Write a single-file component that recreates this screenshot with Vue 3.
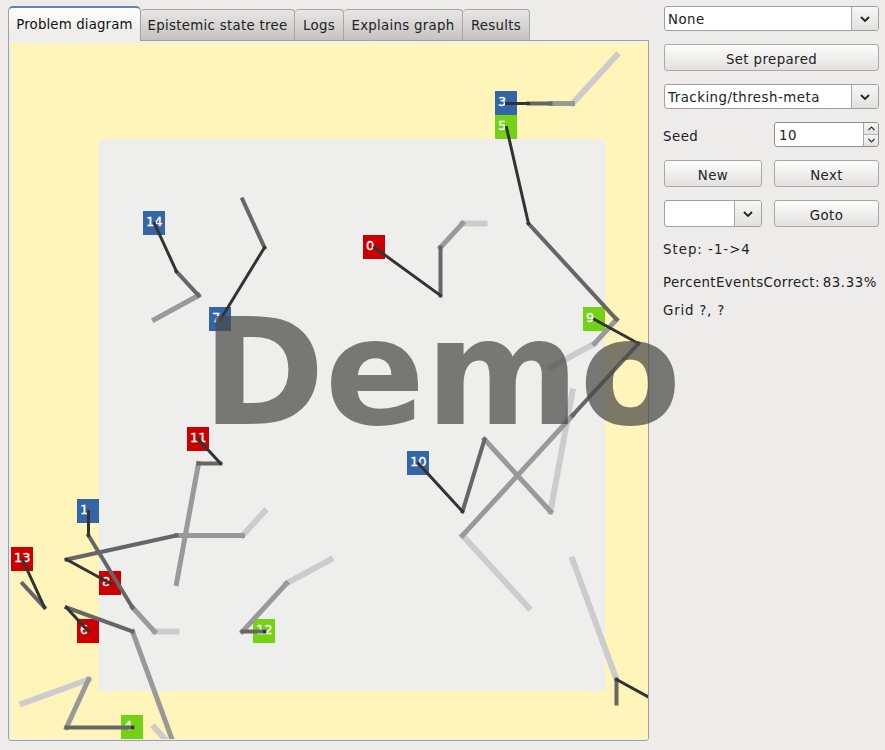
<template>
  <div class="app">
    <div class="main">
      <div class="tabs">
        <div
          v-for="(tab, i) in tabs"
          :key="tab"
          class="tab"
          :class="{ active: i === 0 }"
        >
          {{ tab }}
        </div>
      </div>
      <div class="panel">
        <svg class="canvas" width="637" height="696" viewBox="11 43 637 696">
          <rect x="11" y="43" width="637" height="696" fill="#fff4b9" />
          <rect x="99" y="139" width="506" height="552" fill="#eeeeec" />
          <g v-for="a in agents" :key="a.id">
            <rect :x="a.x - 11" :y="a.y - 12" width="22" height="24" :fill="a.color" />
            <text :x="a.x - 8" :y="a.y + 3" class="label">{{ a.id }}</text>
          </g>
          <g transform="translate(0.5 0.5)">
            <line
              v-for="(s, i) in segments"
              :key="i"
              :x1="s.x1"
              :y1="s.y1"
              :x2="s.x2"
              :y2="s.y2"
              :stroke="s.color"
              :stroke-width="s.width"
              stroke-linecap="square"
            />
          </g>
        </svg>
      </div>
    </div>

    <div class="side">
      <div class="combo">
        <span class="combo-text">None</span>
        <span class="combo-btn"><svg width="10" height="6" viewBox="0 0 10 6"><path d="M1 1l4 4 4-4" fill="none" stroke="#222" stroke-width="1.8" /></svg></span>
      </div>
      <button class="btn wide">Set prepared</button>
      <div class="combo">
        <span class="combo-text">Tracking/thresh-meta</span>
        <span class="combo-btn"><svg width="10" height="6" viewBox="0 0 10 6"><path d="M1 1l4 4 4-4" fill="none" stroke="#222" stroke-width="1.8" /></svg></span>
      </div>
      <div class="row seed">
        <span class="seed-label">Seed</span>
        <div class="spin">
          <span class="spin-text">10</span>
          <span class="spin-btns">
            <span class="spin-up"><svg width="7" height="5" viewBox="0 0 7 5"><path d="M.5 4l3-3 3 3" fill="none" stroke="#333" stroke-width="1.1" /></svg></span>
            <span class="spin-down"><svg width="7" height="5" viewBox="0 0 7 5"><path d="M.5 1l3 3 3-3" fill="none" stroke="#333" stroke-width="1.1" /></svg></span>
          </span>
        </div>
      </div>
      <div class="row">
        <button class="btn">New</button>
        <button class="btn">Next</button>
      </div>
      <div class="row">
        <div class="combo tall">
          <span class="combo-text"></span>
          <span class="combo-btn"><svg width="10" height="6" viewBox="0 0 10 6"><path d="M1 1l4 4 4-4" fill="none" stroke="#222" stroke-width="1.8" /></svg></span>
        </div>
        <button class="btn">Goto</button>
      </div>
      <div class="step">Step: -1-&gt;4</div>
      <div class="percent"><span>PercentEventsCorrect:</span><span class="value">83.33%</span></div>
      <div class="grid-info">Grid ?, ?</div>
    </div>

    <div class="demo">Demo</div>
  </div>
</template>

<script setup>
const tabs = ['Problem diagram', 'Epistemic state tree', 'Logs', 'Explains graph', 'Results']

const RED = '#cc0000'
const BLUE = '#3465a4'
const GREEN = '#73d216'

const agents = [
  { id: 0, x: 374, y: 247, color: RED, path: [[374, 247], [440, 295], [440, 247], [462, 223], [484, 223]] },
  { id: 1, x: 88, y: 511, color: BLUE, path: [[88, 511], [88, 535], [132, 607], [154, 631], [176, 631]] },
  { id: 3, x: 506, y: 103, color: BLUE, path: [[506, 103], [528, 103], [550, 103], [572, 103], [616, 55]] },
  { id: 4, x: 132, y: 727, color: GREEN, path: [[132, 727], [132, 727], [66, 727], [88, 679], [22, 703]] },
  { id: 5, x: 506, y: 127, color: GREEN, path: [[506, 127], [528, 223], [616, 319], [594, 343], [550, 367]] },
  { id: 6, x: 88, y: 631, color: RED, path: [[88, 631], [66, 607], [132, 631], [176, 751], [154, 727]] },
  { id: 7, x: 220, y: 319, color: BLUE, path: [[220, 319], [264, 247], [242, 199]] },
  { id: 8, x: 110, y: 583, color: RED, path: [[110, 583], [66, 559], [176, 535], [242, 535], [264, 511]] },
  { id: 9, x: 594, y: 319, color: GREEN, path: [[594, 319], [638, 343], [572, 415], [462, 535], [528, 607]] },
  { id: 10, x: 418, y: 463, color: BLUE, path: [[418, 463], [462, 511], [484, 439], [550, 511], [572, 391]] },
  { id: 11, x: 198, y: 439, color: RED, path: [[198, 439], [220, 463], [198, 463], [176, 583]] },
  { id: 12, x: 264, y: 631, color: GREEN, path: [[264, 631], [264, 631], [242, 631], [286, 583], [330, 559]] },
  { id: 13, x: 22, y: 559, color: RED, path: [[22, 559], [44, 607], [22, 583]] },
  { id: 14, x: 154, y: 223, color: BLUE, path: [[154, 223], [176, 271], [198, 295], [154, 319]] }
]

// this one has no square on the canvas, it starts past the right edge
const offscreen = [[660, 703], [616, 679], [616, 703]]

const styles = [
  { color: '#333333', width: 3 },
  { color: '#666666', width: 4 },
  { color: '#999999', width: 5 },
  { color: '#cccccc', width: 6 }
]

const toSegments = (path) =>
  path.slice(1).map((p, i) => ({
    x1: path[i][0],
    y1: path[i][1],
    x2: p[0],
    y2: p[1],
    level: i,
    ...styles[i]
  }))

// lightest first, so the fresh dark trail ends up on top
const segments = [
  { x1: 616, y1: 679, x2: 572, y2: 559, level: 3, ...styles[3] },
  ...toSegments(offscreen),
  ...agents.flatMap((a) => toSegments(a.path))
].sort((a, b) => b.level - a.level)
</script>

<style>
html,
body {
  background: #edecea;
}
</style>

<style scoped>
.app {
  position: relative;
  display: flex;
  gap: 15px;
  width: 885px;
  height: 750px;
  padding: 6px 6px 0 8px;
  box-sizing: border-box;
  overflow: hidden;
  background: #edecea;
  font-family: "DejaVu Sans", sans-serif;
  font-size: 13.33px;
  color: #222;
}
.main {
  width: 641px;
}
.tabs {
  display: flex;
  align-items: flex-end;
  height: 35px;
  margin-bottom: -1px;
  position: relative;
  z-index: 1;
}
.tab {
  height: 32px;
  line-height: 32px;
  box-sizing: border-box;
  text-align: center;
  letter-spacing: 0.3px;
  border: 1px solid #a6a6a6;
  border-bottom-color: #a0a0a0;
  border-left-width: 0;
  border-radius: 4px 4px 0 0;
  background: linear-gradient(#e8e7e5, #c4c3c1);
  color: #222;
  white-space: nowrap;
}
.tab:nth-child(1) { width: 133px; }
.tab:nth-child(2) { width: 154px; }
.tab:nth-child(3) { width: 49px; }
.tab:nth-child(4) { width: 119px; }
.tab:nth-child(5) { width: 67px; }
.tab.active {
  height: 35px;
  line-height: 34px;
  letter-spacing: 0.15px;
  border: 1px solid #a0a0a0;
  border-top: 2px solid #5b86b9;
  border-bottom: 0;
  border-radius: 5px 5px 0 0;
  background: linear-gradient(#ffffff, #efeeec 70%);
  color: #111;
}
.panel {
  height: 701px;
  padding: 2px 0 0 2px;
  box-sizing: border-box;
  border: 1px solid #a0a0a0;
  border-radius: 0 0 3px 3px;
  background: #f0efed;
}
.canvas {
  display: block;
}
.label {
  font-family: "DejaVu Sans", sans-serif;
  font-size: 13px;
  fill: #fff;
  stroke: #fff;
  stroke-width: 0.3px;
}
.side {
  width: 215px;
  display: flex;
  flex-direction: column;
  letter-spacing: 0.5px;
}
.row {
  display: grid;
  grid-template-columns: 98px 105px;
  column-gap: 12px;
  align-items: center;
}
.btn {
  display: block;
  width: 100%;
  height: 27px;
  padding: 3px 0 0;
  border: 1px solid #a8a8a8;
  border-radius: 3px;
  background: linear-gradient(#fdfdfc, #e2e1df);
  font: inherit;
  letter-spacing: 0.4px;
  color: #222;
}
.combo {
  display: flex;
  height: 25px;
  box-sizing: border-box;
  border: 1px solid #a0a0a0;
  border-radius: 3px;
  background: #fff;
  overflow: hidden;
}
.combo.tall {
  height: 27px;
}
.combo-text {
  flex: 1;
  padding-left: 3px;
  line-height: 26px;
}
.combo-btn {
  display: flex;
  align-items: center;
  justify-content: center;
  width: 26px;
  border-left: 1px solid #a8a8a8;
  background: linear-gradient(#f6f6f5, #e2e1df);
}
.wide {
  margin-top: 13px;
  margin-bottom: 13px;
}
.seed {
  margin-top: 13px;
}
.seed-label {
  margin-left: -1px;
  padding-top: 3px;
}
.spin {
  display: flex;
  height: 25px;
  box-sizing: border-box;
  border: 1px solid #8f8f8f;
  border-radius: 3px;
  background: #fff;
  overflow: hidden;
}
.spin-text {
  flex: 1;
  padding-left: 4px;
  line-height: 25px;
}
.spin-btns {
  display: flex;
  flex-direction: column;
  width: 14px;
  border-left: 1px solid #a8a8a8;
}
.spin-up,
.spin-down {
  flex: 1;
  display: flex;
  align-items: center;
  justify-content: center;
  background: linear-gradient(#f6f6f5, #e2e1df);
}
.spin-up {
  border-bottom: 1px solid #b5b5b5;
}
.row + .row {
  margin-top: 13px;
}
.step {
  margin: 14px 0 0 -1px;
  line-height: 18px;
  letter-spacing: 1px;
}
.percent {
  margin: 15px 0 0 -1px;
  line-height: 18px;
  display: flex;
  gap: 3px;
  white-space: nowrap;
  letter-spacing: 0.4px;
}
.value {
  letter-spacing: 0.55px;
}
.grid-info {
  margin: 10px 0 0 -1px;
  line-height: 18px;
  letter-spacing: 0.8px;
}
.demo {
  position: absolute;
  left: 202px;
  top: 286px;
  font-size: 148px;
  font-weight: bold;
  line-height: 175px;
  letter-spacing: 0;
  color: rgba(74, 74, 72, 0.73);
  pointer-events: none;
  white-space: nowrap;
}
</style>
